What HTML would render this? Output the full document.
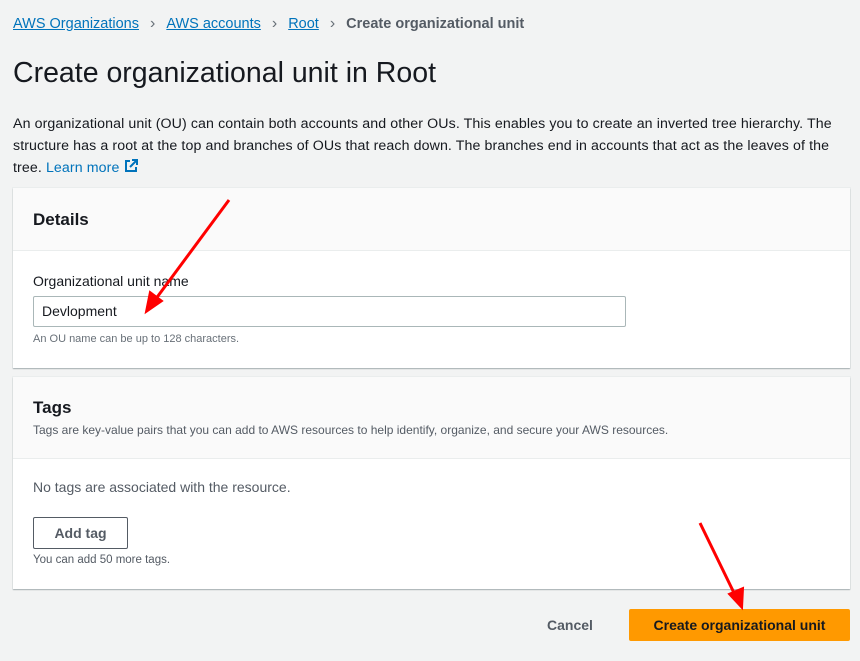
<!DOCTYPE html>
<html><head><style>
body{margin:0;width:860px;height:661px;background:#f2f3f3;font-family:"Liberation Sans",sans-serif;color:#16191f;position:relative;overflow:hidden}
.a{position:absolute}
.bc{top:15px;left:13px;font-size:14.5px;white-space:nowrap}
.bc a{color:#0073bb;text-decoration:underline}
.bc .s{color:#687078;margin:0 11px;font-size:16px}
.bc b{color:#545b64}
h1{position:absolute;top:57px;left:13px;margin:0;font-size:28.5px;font-weight:normal}
.p{top:113px;left:13px;width:835px;font-size:14.2px;line-height:22px;letter-spacing:0.1px}
.panel{position:absolute;left:13px;width:837px;background:#fff;box-shadow:0 1px 1px rgba(0,28,36,.3),0 0 0 1px #eaeded}
.hd{background:#fafafa;border-bottom:1px solid #eaeded}
</style></head><body>
<div class="a bc"><a>AWS Organizations</a><span class="s">›</span><a>AWS accounts</a><span class="s">›</span><a>Root</a><span class="s">›</span><b>Create organizational unit</b></div>
<h1>Create organizational unit in Root</h1>
<div class="a p">An organizational unit (OU) can contain both accounts and other OUs. This enables you to create an inverted tree hierarchy. The structure has a root at the top and branches of OUs that reach down. The branches end in accounts that act as the leaves of the tree. <span style="color:#0073bb">Learn more <svg width="14" height="14" viewBox="0 0 14 14" style="vertical-align:-1px"><path d="M6 2H2v10h10V8M8 1h5v5M13 1L6 8" stroke="#0073bb" stroke-width="2" fill="none"/></svg></span></div>

<div class="panel" style="top:188px;height:180px">
<div class="hd" style="height:62px"><div style="position:absolute;left:20px;top:22px;font-size:17px;font-weight:bold">Details</div></div>
<div class="a" style="left:20px;top:85px;font-size:14px">Organizational unit name</div>
<div class="a" style="left:20px;top:108px;width:583px;height:29px;border:1px solid #aab7b8;border-radius:2px;font-size:14px;line-height:29px;padding-left:8px">Devlopment</div>
<div class="a" style="left:20px;top:145px;font-size:11px;color:#687078">An OU name can be up to 128 characters.</div>
</div>

<div class="panel" style="top:377px;height:212px">
<div class="hd" style="height:81px"><div style="position:absolute;left:20px;top:21px;font-size:17px;font-weight:bold">Tags</div>
<div style="position:absolute;left:20px;top:46px;font-size:12px;color:#545b64">Tags are key-value pairs that you can add to AWS resources to help identify, organize, and secure your AWS resources.</div></div>
<div class="a" style="left:20px;top:102px;font-size:14px;color:#545b64">No tags are associated with the resource.</div>
<div class="a" style="left:20px;top:140px;width:93px;height:30px;border:1px solid #545b64;border-radius:2px;text-align:center;line-height:30px;font-size:14px;font-weight:bold;color:#545b64">Add tag</div>
<div class="a" style="left:20px;top:177px;font-size:11.5px;color:#545b64">You can add 50 more tags.</div>
</div>

<div class="a" style="left:547px;top:617px;font-size:14px;font-weight:bold;color:#545b64">Cancel</div>
<div class="a" style="left:629px;top:609px;width:221px;height:32px;background:#ff9900;border-radius:2px;text-align:center;line-height:32px;font-size:14px;font-weight:bold;color:#16191f">Create organizational unit</div>

<svg class="a" style="left:0;top:0" width="860" height="661">
<path d="M229 200L155 300" stroke="#f00" stroke-width="3"/>
<path d="M146 312L150 292L162 301Z" fill="#f00" stroke="#f00" stroke-width="2"/>
<path d="M700 523L736 597" stroke="#f00" stroke-width="3"/>
<path d="M742 608L729 594L743 588Z" fill="#f00" stroke="#f00" stroke-width="2"/>
</svg>
</body></html>
